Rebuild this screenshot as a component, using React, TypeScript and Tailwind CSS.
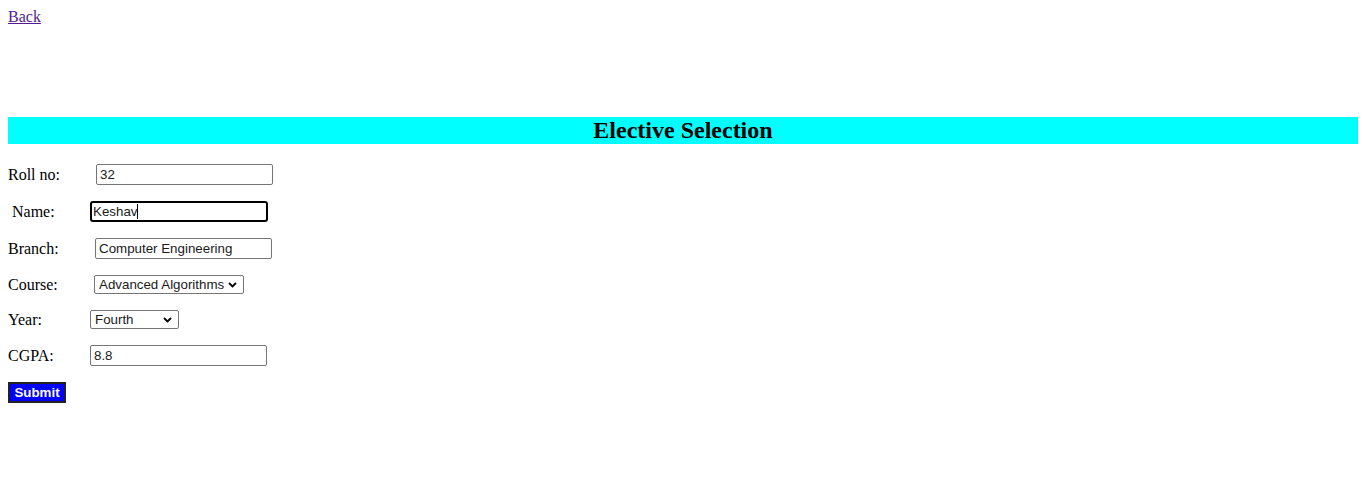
import { ReactNode } from 'react';

const serif = { fontFamily: '"Liberation Serif", "Times New Roman", serif' };
const sans = { fontFamily: '"Liberation Sans", Arial, sans-serif' };

function Row({ label, labelWidth, indent, children, mt }: { label: string; labelWidth: string; indent?: boolean; children: ReactNode; mt: string }) {
  return (
    <div className={`flex items-center ${mt}`}>
      <label className={`${labelWidth} ${indent ? 'pl-[4px]' : ''} text-[16px] text-black leading-none`} style={serif}>
        {label}
      </label>
      {children}
    </div>
  );
}

function TextBox({ value, width }: { value: string; width: string }) {
  return (
    <input
      readOnly
      defaultValue={value}
      className={`${width} h-[21px] border border-[#767676] rounded-[2px] pl-[3px] pr-[2px] text-[13.33px] text-[#1a1a1a] bg-white outline-none`}
      style={sans}
    />
  );
}

function Select({ value, width }: { value: string; width: string }) {
  return (
    <div
      className={`${width} h-[19px] border border-[#767676] rounded-[2px] bg-white flex items-center justify-between pl-[4px] pr-[6px] text-[13.33px] text-[#1a1a1a]`}
      style={sans}
    >
      <span className="leading-none">{value}</span>
      <svg width="9" height="6" viewBox="0 0 9 6" className="shrink-0">
        <path d="M1 1 L4.5 4.5 L8 1" fill="none" stroke="#000" strokeWidth="1.8" />
      </svg>
    </div>
  );
}

export default function App() {
  return (
    <div className="min-h-[500px] bg-white p-[8px]" style={serif}>
      <div className="h-[18px] leading-[18px]">
        <a href="#" className="text-[16px] text-[#551a8b] underline">Back</a>
      </div>

      <h2 className="mt-[91px] h-[27px] bg-[#00ffff] text-center text-[24px] font-bold leading-[27px] text-black">
        Elective Selection
      </h2>

      <Row label="Roll no:" labelWidth="w-[88px]" mt="mt-[20px]">
        <TextBox value="32" width="w-[177px]" />
      </Row>

      <Row label="Name:" labelWidth="w-[82px]" indent mt="mt-[16px]">
        <div
          className="w-[178px] h-[21px] border-2 border-black rounded-[3px] pl-[1px] flex items-center text-[13.33px] text-[#1a1a1a]"
          style={sans}
        >
          <span className="leading-none">Keshav</span>
          <span className="w-px h-[15px] bg-black" />
        </div>
      </Row>

      <Row label="Branch:" labelWidth="w-[87px]" mt="mt-[16px]">
        <TextBox value="Computer Engineering" width="w-[177px]" />
      </Row>

      <Row label="Course:" labelWidth="w-[86px]" mt="mt-[16px]">
        <Select value="Advanced Algorithms" width="w-[150px]" />
      </Row>

      <Row label="Year:" labelWidth="w-[82px]" mt="mt-[16px]">
        <Select value="Fourth" width="w-[89px]" />
      </Row>

      <Row label="CGPA:" labelWidth="w-[82px]" mt="mt-[16px]">
        <TextBox value="8.8" width="w-[177px]" />
      </Row>

      <div className="mt-[16px] flex">
        <button
          className="w-[58px] h-[21px] bg-[#0000ff] border-2 border-[#222] text-white font-bold text-[13.33px] leading-none"
          style={sans}
        >
          Submit
        </button>
      </div>
    </div>
  );
}
